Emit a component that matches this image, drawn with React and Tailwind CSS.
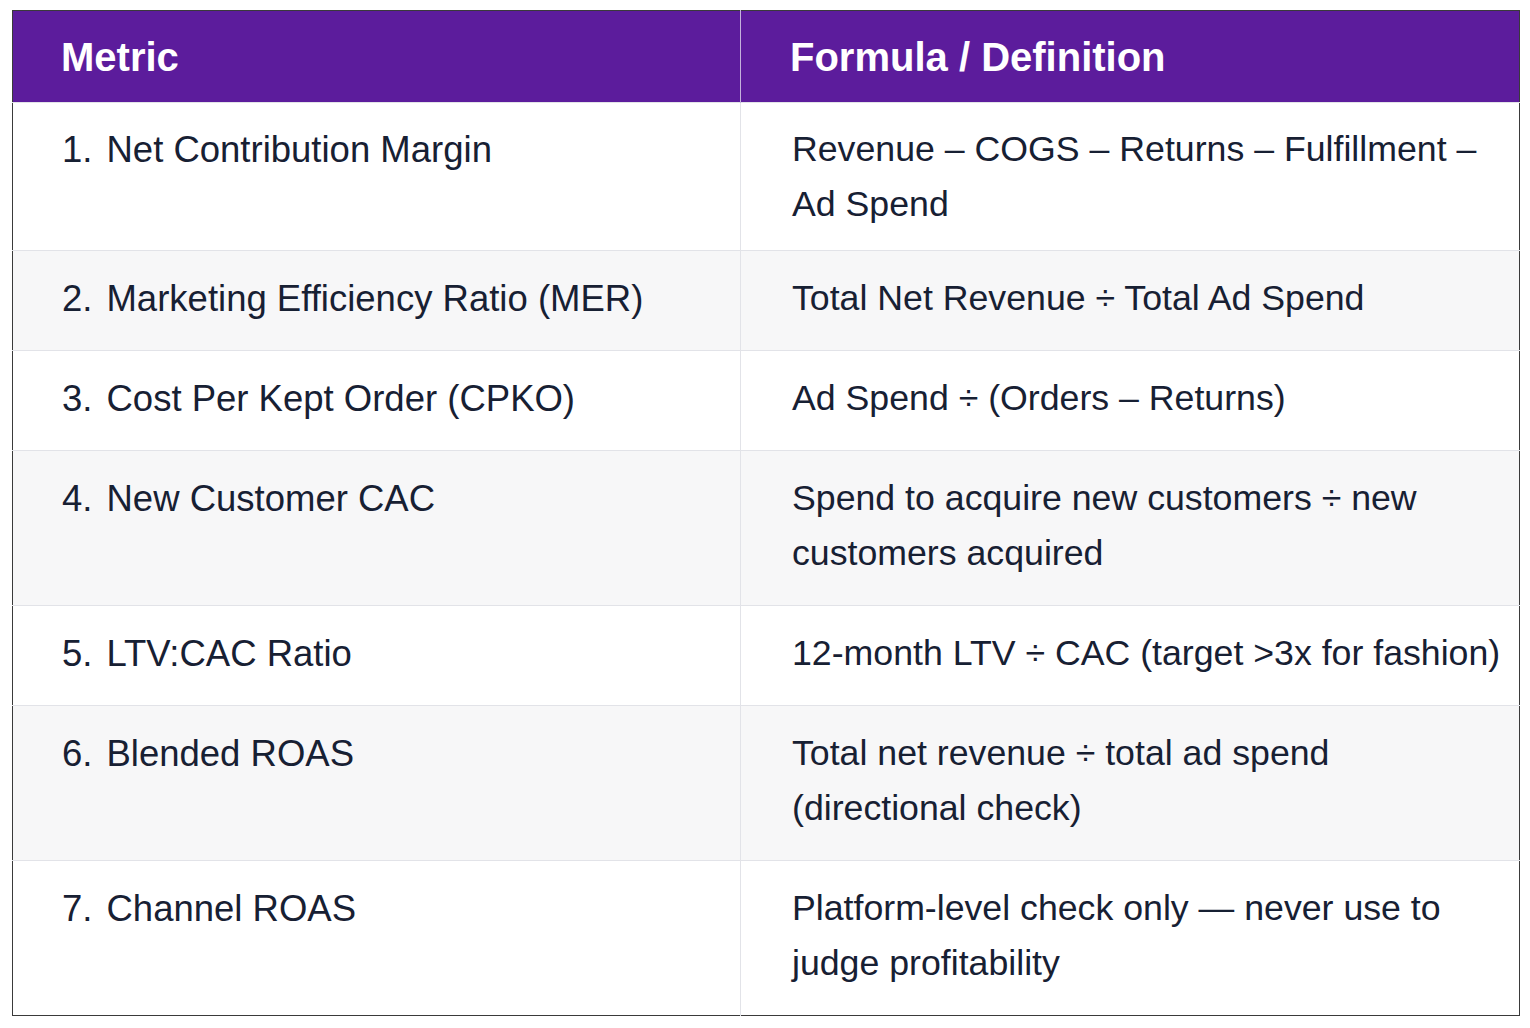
const rows = [
  {
    metric: "Net Contribution Margin",
    formula: "Revenue – COGS – Returns – Fulfillment – Ad Spend",
  },
  {
    metric: "Marketing Efficiency Ratio (MER)",
    formula: "Total Net Revenue ÷ Total Ad Spend",
  },
  {
    metric: "Cost Per Kept Order (CPKO)",
    formula: "Ad Spend ÷ (Orders – Returns)",
  },
  {
    metric: "New Customer CAC",
    formula: "Spend to acquire new customers ÷ new customers acquired",
  },
  {
    metric: "LTV:CAC Ratio",
    formula: "12-month LTV ÷ CAC (target >3x for fashion)",
  },
  {
    metric: "Blended ROAS",
    formula: "Total net revenue ÷ total ad spend (directional check)",
  },
  {
    metric: "Channel ROAS",
    formula: "Platform-level check only — never use to judge profitability",
  },
];

function App() {
  return (
    <div className="min-h-screen bg-white pt-[10px] pl-[12px] font-['Liberation_Sans',Arial,sans-serif]">
      <table className="w-[1508px] table-fixed border-collapse border border-[#3a3a3a]">
        <colgroup>
          <col className="w-[728px]" />
          <col />
        </colgroup>
        <thead>
          <tr className="bg-[#5c1c9c] text-white">
            <th className="h-[92px] border-r border-[#c4b2dc] pl-[48px] text-left text-[40px] font-bold">
              Metric
            </th>
            <th className="h-[92px] pl-[49px] text-left text-[40px] font-bold">
              Formula / Definition
            </th>
          </tr>
        </thead>
        <tbody>
          {rows.map((row, i) => {
            const pad = i === 0 ? "pt-[19px] pb-[18px]" : "pt-[20px] pb-[24px]";
            return (
              <tr
                key={i}
                className={`border-t border-[#e2e3e8] text-[#172033] ${i % 2 === 1 ? "bg-[#f7f7f8]" : "bg-white"}`}
              >
                <td className={`border-r border-[#e2e3e8] ${pad} pl-[49px] pr-6 align-top text-[36.5px] leading-[55px]`}>
                  <span>{i + 1}.</span>
                  <span className="ml-[14px]">{row.metric}</span>
                </td>
                <td className={`${pad} pl-[51px] pr-3 align-top text-[35.7px] leading-[55px]`}>
                  {row.formula}
                </td>
              </tr>
            );
          })}
        </tbody>
      </table>
    </div>
  );
}

export default App;
